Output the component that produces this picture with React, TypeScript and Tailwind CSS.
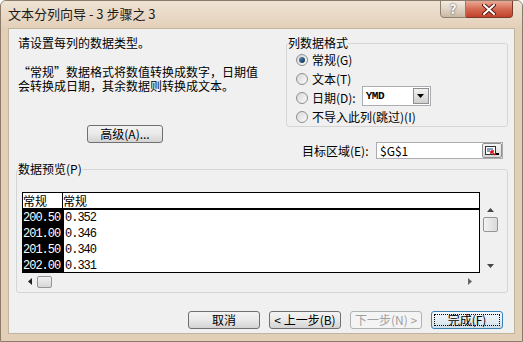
import React from "react";

const btnBase =
  "h-[18px] w-[72px] rounded-[3px] border flex items-center justify-center text-[12px] leading-[14px]";

function Button({
  children,
  kind = "normal",
  className = "",
}: {
  children: React.ReactNode;
  kind?: "normal" | "disabled" | "default";
  className?: string;
}) {
  if (kind === "disabled") {
    return (
      <div
        className={`${btnBase} ${className} border-[#adb2b5] bg-[#f4f4f4] text-[#a0a0a0]`}
      >
        {children}
      </div>
    );
  }
  if (kind === "default") {
    return (
      <div
        className={`${btnBase} ${className} border-[#3c7fb1] bg-gradient-to-b from-[#f4f9fc] via-[#e6eef4] to-[#cfdfe9] p-[2px]`}
      >
        <div className="w-full h-full flex items-center justify-center border border-dotted border-black">
          {children}
        </div>
      </div>
    );
  }
  return (
    <div
      className={`${btnBase} ${className} border-[#707070] bg-gradient-to-b from-[#f3f3f3] via-[#e9e9e9] to-[#d3d3d3]`}
    >
      {children}
    </div>
  );
}

function Radio({ checked = false }: { checked?: boolean }) {
  return (
    <div className="w-[12px] h-[12px] rounded-full border border-[#8b8e90] bg-gradient-to-br from-[#d8d8d8] to-[#fbfbfb] flex items-center justify-center shrink-0">
      {checked && (
        <div className="w-[6px] h-[6px] rounded-full bg-gradient-to-br from-[#5c8fbe] to-[#0c2c4c]" />
      )}
    </div>
  );
}

function TriUp() {
  return (
    <svg width="7" height="4" viewBox="0 0 7 4">
      <path d="M0 4 L3.5 0 L7 4 Z" fill="#444" />
    </svg>
  );
}
function TriDown({ color = "#444" }: { color?: string }) {
  return (
    <svg width="7" height="4" viewBox="0 0 7 4">
      <path d="M0 0 L3.5 4 L7 0 Z" fill={color} />
    </svg>
  );
}
function TriLeft() {
  return (
    <svg width="4" height="7" viewBox="0 0 4 7">
      <path d="M4 0 L0 3.5 L4 7 Z" fill="#222" />
    </svg>
  );
}
function TriRight() {
  return (
    <svg width="4" height="7" viewBox="0 0 4 7">
      <path d="M0 0 L4 3.5 L0 7 Z" fill="#666" />
    </svg>
  );
}

const rows = [
  ["200.50", "0.352"],
  ["201.00", "0.346"],
  ["201.50", "0.340"],
  ["202.00", "0.331"],
];

export default function App() {
  return (
    <div className="w-[523px] h-[342px] flex flex-col overflow-hidden rounded-t-[6px] border border-[#8b7b68] bg-[#e2cfb8] text-[12px] leading-[14px] text-black font-['Noto_Sans_CJK_SC','Noto_Sans',sans-serif]">
      {/* title bar */}
      <div className="h-[27px] flex items-start justify-between bg-gradient-to-b from-[#efe3d4] to-[#e3d0ba]">
        <div className="pl-[7px] pt-[5px] text-[13px] leading-[15px] text-[#1a1a1a]">
          文本分列向导 - 3 步骤之 3
        </div>
        <div className="flex -mt-[1px] mr-[9px]">
          <div className="w-[26px] h-[18px] rounded-bl-[4px] border border-[#8d7f70] bg-gradient-to-b from-[#f3ebe2] via-[#e0d3c4] to-[#c9b8a4] flex items-center justify-center text-white font-bold text-[13px] [text-shadow:0_0_2px_#222]">
            ?
          </div>
          <div className="w-[47px] h-[18px] rounded-br-[4px] border border-l-0 border-[#7c3a2a] bg-gradient-to-b from-[#e9a897] via-[#d46a52] to-[#c2402a] flex items-center justify-center">
            <svg width="14" height="11" viewBox="0 0 14 11">
              <path
                d="M2 1 L12 10 M12 1 L2 10"
                stroke="#5a1a10"
                strokeWidth="4"
                strokeLinecap="round"
              />
              <path
                d="M2 1 L12 10 M12 1 L2 10"
                stroke="#fff"
                strokeWidth="2"
                strokeLinecap="round"
              />
            </svg>
          </div>
        </div>
      </div>

      {/* content panel */}
      <div className="mx-[7px] h-[306px] flex flex-col border border-[#c2b39f] bg-[#f0f0f0] overflow-hidden">
        <div className="flex">
          {/* left column */}
          <div className="w-[277px] pl-[9px] pt-[7px]">
            <div>请设置每列的数据类型。</div>
            <div className="mt-[15px] h-[14px]">“常规”数据格式将数值转换成数字，日期值</div>
            <div className="h-[14px]">会转换成日期，其余数据则转换成文本。</div>
            <Button className="ml-[69px] mt-[32px] w-[76px]">高级(A)...</Button>
          </div>

          {/* right column */}
          <div className="w-[222px] pt-[7px]">
            <fieldset className="w-[222px] border border-[#d5d5d5] rounded-[3px] px-0 pb-0">
              <legend className="ml-[1px] px-0 leading-[14px]">列数据格式</legend>
              <div className="flex items-center h-[19px] pl-[9px] gap-[4px]">
                <Radio checked />
                <span>常规(G)</span>
              </div>
              <div className="flex items-center h-[19px] pl-[9px] gap-[4px]">
                <Radio />
                <span>文本(T)</span>
              </div>
              <div className="flex items-center h-[19px] pl-[9px] gap-[4px]">
                <Radio />
                <span>日期(D):</span>
                <div className="ml-[2px] mb-[4px] w-[69px] h-[20px] border border-[#abadb3] bg-white flex items-center">
                  <span className="pl-[3px] flex-1 font-['Liberation_Mono',monospace] text-[11px] font-bold tracking-[-0.5px]">
                    YMD
                  </span>
                  <div className="w-[16px] h-[16px] mr-[1px] border border-[#8e8f8f] bg-gradient-to-b from-[#f2f2f2] to-[#cfcfcf] flex items-center justify-center">
                    <TriDown color="#000" />
                  </div>
                </div>
              </div>
              <div className="flex items-center h-[19px] pl-[9px] gap-[4px]">
                <Radio />
                <span>不导入此列(跳过)(I)</span>
              </div>
            </fieldset>
            <div className="mt-[15px] flex items-center h-[17px] pl-[16px]">
              <span className="w-[74px]">目标区域(E):</span>
              <div className="w-[127px] h-[17px] border border-[#abadb3] bg-white flex items-center">
                <span className="pl-[3px] flex-1">$G$1</span>
                <div className="w-[20px] h-[15px] border border-[#8e8f8f] rounded-[2px] bg-gradient-to-b from-[#f6f6f6] to-[#d8d8d8] flex items-center justify-center">
                  <svg width="14" height="10" viewBox="0 0 14 10">
                    <rect x="0.5" y="0.5" width="10" height="8" fill="#fff" stroke="#333" />
                    <path d="M2 3 H8 M2 5 H5" stroke="#1e3c8c" strokeWidth="1" />
                    <path d="M6 5 L10 9 M6 5 L6 8 M6 5 L9 5" stroke="#d01010" strokeWidth="1.5" />
                    <rect x="11" y="7" width="3" height="2" fill="#000" />
                  </svg>
                </div>
              </div>
            </div>
          </div>
        </div>

        {/* preview */}
        <fieldset className="ml-[7px] mt-[3px] w-[492px] border border-[#d5d5d5] rounded-[3px] px-0 pb-[2px]">
          <legend className="ml-[1px] px-0 leading-[14px]">数据预览(P)</legend>
          <div className="pl-[5px] pt-[16px]">
            <div className="flex">
              <div className="w-[458px] h-[81px] border border-black bg-white overflow-hidden">
                <div className="flex h-[15px] items-end">
                  <div className="w-[40px] h-full border-r border-black leading-[15px]">常规</div>
                  <div className="flex-1 leading-[15px]">常规</div>
                </div>
                <div className="h-[2px] bg-black" />
                {rows.map(([a, b]) => (
                  <div key={a} className="flex h-[16px] items-center font-['Liberation_Mono',monospace] text-[12px] tracking-[-1px]">
                    <div className="w-[41px] h-full bg-black text-white flex items-center">{a}</div>
                    <div className="flex-1 pl-[1px]">{b}</div>
                  </div>
                ))}
              </div>
              <div className="ml-[2px] w-[16px] h-[81px] flex flex-col items-center">
                <div className="h-[12px]" />
                <div className="h-[12px] flex items-center justify-center">
                  <TriUp />
                </div>
                <div className="mt-[1px] w-[15px] h-[15px] rounded-[2px] border border-[#959595] bg-gradient-to-r from-[#f3f3f3] to-[#d9d9d9]" />
                <div className="flex-1" />
                <div className="h-[14px] flex items-center justify-center">
                  <TriDown />
                </div>
              </div>
            </div>
            <div className="w-[458px] h-[17px] flex items-center pl-[6px] pr-[8px]">
              <TriLeft />
              <div className="ml-[5px] w-[15px] h-[12px] rounded-[2px] border border-[#959595] bg-gradient-to-b from-[#f3f3f3] to-[#d6d6d6]" />
              <div className="flex-1" />
              <TriRight />
            </div>
          </div>
        </fieldset>

        {/* buttons */}
        <div className="mt-[18px] flex justify-end gap-[9px] pr-[11px]">
          <Button>取消</Button>
          <Button>&lt; 上一步(B)</Button>
          <Button kind="disabled">下一步(N) &gt;</Button>
          <Button kind="default">完成(F)</Button>
        </div>
      </div>
    </div>
  );
}
